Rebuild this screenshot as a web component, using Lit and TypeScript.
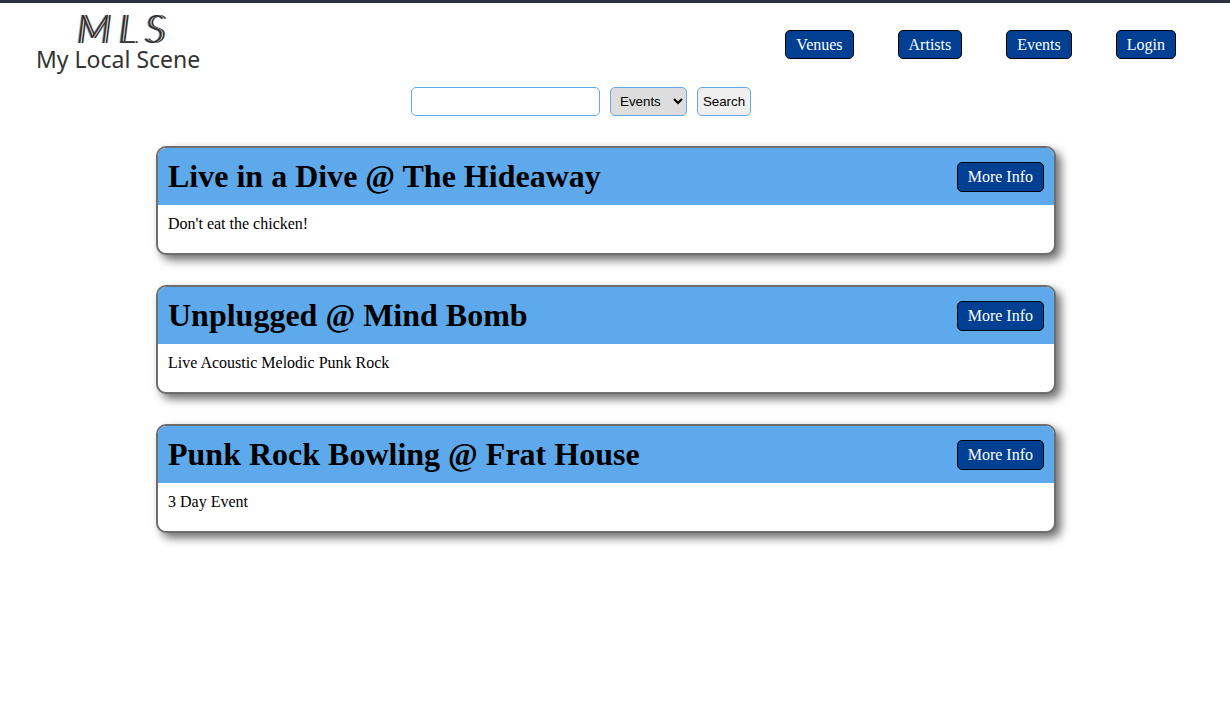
import { LitElement, html, css } from "lit";
import { customElement, property } from "lit/decorators.js";

@customElement("event-card")
class EventCard extends LitElement {
  @property() heading = "";
  @property() details = "";

  static styles = css`
    :host {
      display: block;
      border: 2px solid #6e6e6e;
      border-radius: 10px;
      overflow: hidden;
      background: #fff;
      box-shadow: 5px 5px 10px #6e6e6e;
    }
    .head {
      display: flex;
      align-items: center;
      justify-content: space-between;
      padding: 10px;
      background: #5ea9eb;
    }
    .title {
      margin: 0;
      font-size: 32px;
      line-height: 37px;
      font-weight: bold;
    }
    .more {
      padding: 5px 10px;
      border: 1px solid #000;
      border-radius: 5px;
      background: #003f91;
      color: #fff;
      font: 16px/18px "Liberation Serif", serif;
      text-decoration: none;
    }
    .body {
      margin: 0;
      padding: 10px 10px 20px;
      font-size: 16px;
      line-height: 18px;
    }
  `;

  render() {
    return html`
      <div class="head">
        <h1 class="title">${this.heading}</h1>
        <a class="more" href="#">More Info</a>
      </div>
      <p class="body">${this.details}</p>
    `;
  }
}

@customElement("app-root")
class AppRoot extends LitElement {
  static styles = css`
    :host {
      display: block;
      border-top: 3px solid #2f3241;
      background: #fff;
      color: #000;
      font-family: "Liberation Serif", serif;
    }
    .top {
      display: flex;
      align-items: center;
      justify-content: space-between;
      padding: 8px 54px 10px 36px;
    }
    .logo {
      display: flex;
      flex-direction: column;
      align-items: center;
      padding-bottom: 4px;
      color: #333;
      text-decoration: none;
    }
    .mark {
      display: flex;
      gap: 8px;
      padding-left: 4px;
      font: italic 300 40px/34px Lato, sans-serif;
      color: #2d3038;
      text-shadow: 1px 0 0 #f3c58c, 3px 0 0 #2d3038, -1px 0 0 #7dbbea;
    }
    .name {
      font: 23px/28px "Noto Sans", sans-serif;
    }
    .nav {
      display: flex;
      gap: 44px;
    }
    .link {
      padding: 5px 10px;
      border: 1px solid #000;
      border-radius: 5px;
      background: #003f91;
      color: #fff;
      font-size: 16px;
      line-height: 17px;
      text-decoration: none;
    }
    .search {
      display: flex;
      justify-content: center;
      gap: 10px;
      padding-right: 68px;
    }
    .field {
      box-sizing: border-box;
      height: 29px;
      margin: 0;
      border: 1px solid #5ea9eb;
      border-radius: 5px;
      color: #000;
      font-family: "Liberation Sans", sans-serif;
    }
    .query {
      width: 189px;
      padding: 5px 10px;
      background: #fff;
    }
    .kind {
      width: 77px;
      padding: 5px;
      background: #ddd;
    }
    .go {
      width: 54px;
      padding: 0;
      background: #efefef;
    }
    .list {
      display: flex;
      flex-direction: column;
      gap: 30px;
      max-width: 900px;
      margin: 0 auto;
      padding: 30px 18px 30px 0;
    }
  `;

  private links = ["Venues", "Artists", "Events", "Login"];
  private events = [
    { heading: "Live in a Dive @ The Hideaway", details: "Don't eat the chicken!" },
    { heading: "Unplugged @ Mind Bomb", details: "Live Acoustic Melodic Punk Rock" },
    { heading: "Punk Rock Bowling @ Frat House", details: "3 Day Event" },
  ];

  render() {
    return html`
      <header class="top">
        <a class="logo" href="#">
          <span class="mark"><span>M</span><span>L</span><span>S</span></span>
          <span class="name">My Local Scene</span>
        </a>
        <nav class="nav">
          ${this.links.map((l) => html`<a class="link" href="#">${l}</a>`)}
        </nav>
      </header>
      <form class="search" @submit=${(e: Event) => e.preventDefault()}>
        <input class="field query" type="text" aria-label="Search text" />
        <select class="field kind" aria-label="Search in">
          <option>Events</option>
          <option>Venues</option>
          <option>Artists</option>
        </select>
        <button class="field go" type="submit">Search</button>
      </form>
      <main class="list">
        ${this.events.map(
          (e) => html`<event-card .heading=${e.heading} .details=${e.details}></event-card>`
        )}
      </main>
    `;
  }
}
